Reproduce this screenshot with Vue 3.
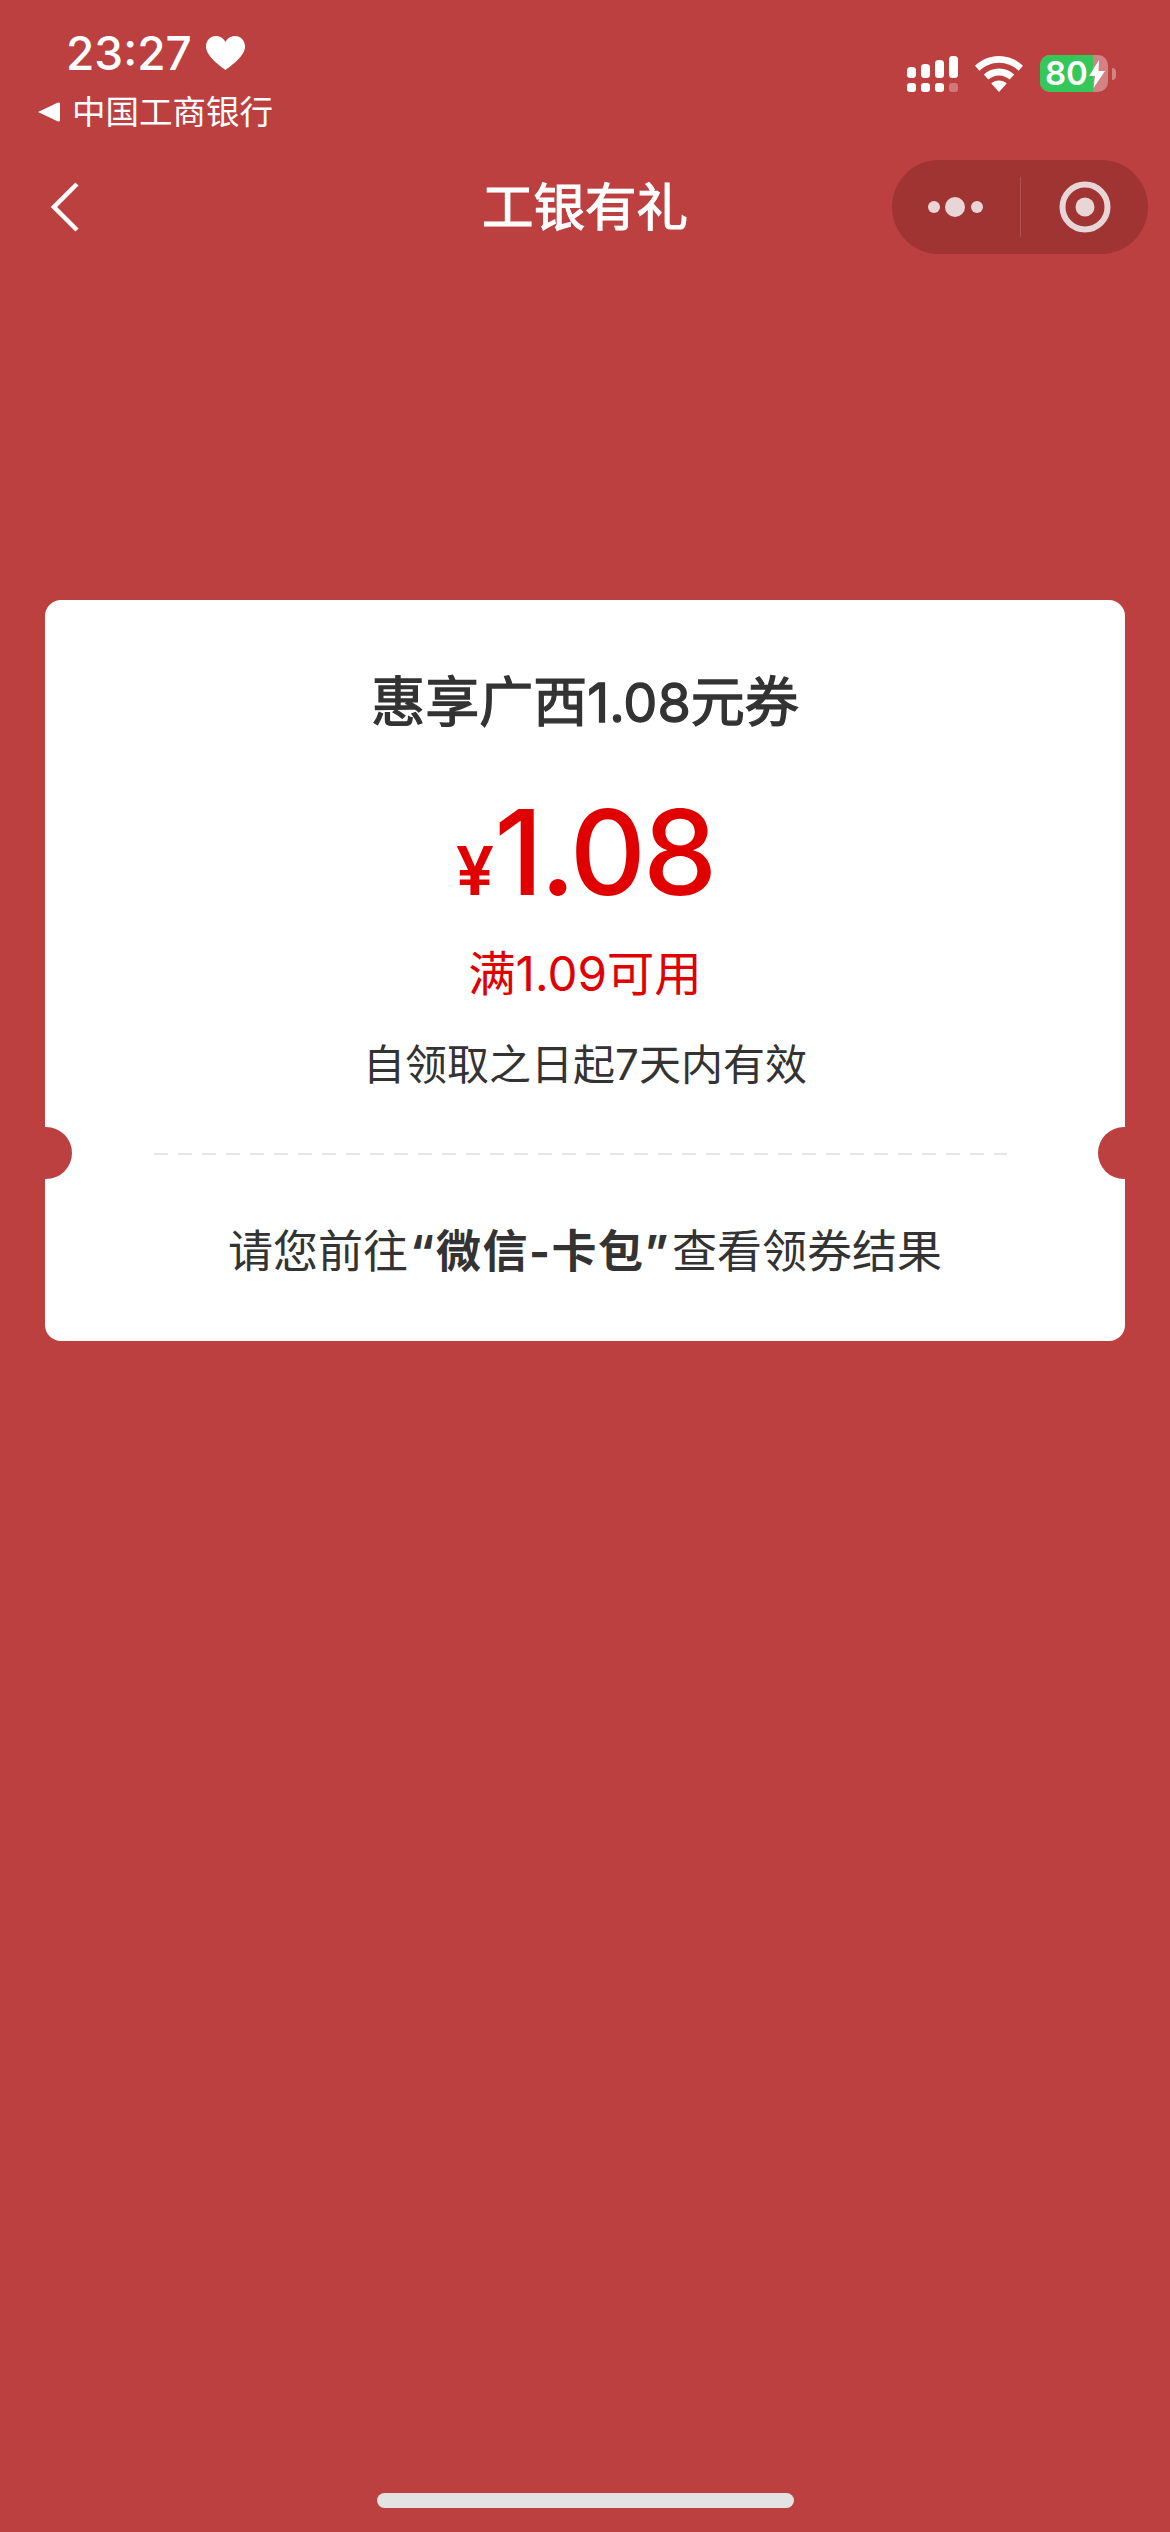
<script setup>
const signalBars = [
  { x: 907, y: 67, h: 11 },
  { x: 921, y: 64, h: 14 },
  { x: 935, y: 60, h: 18 },
  { x: 949, y: 56, h: 22 },
]
</script>

<template>
  <div class="page">
    <div class="status-bar">
      <div class="status-left">
        <div class="time-row">
          <span class="time">23:27</span>
          <svg class="heart" viewBox="0 0 39 34" width="39" height="34">
            <path d="M19.5 34C17 31.6 0 21 0 10.4 0 4.4 4.4 0 10 0c4 0 7.6 2.2 9.5 6C21.400 2.200 25 0 29 0c5.600 0 10 4.400 10 10.400C39 21 22 31.600 19.500 34z" fill="#fff" />
          </svg>
        </div>
        <div class="carrier-row">
          <svg class="carrier-arrow" viewBox="0 0 22 20" width="22" height="20">
            <path d="M0 10 20 0.500a1.500 1.500 0 0 1 2 1.500v16a1.500 1.500 0 0 1-2 1.500z" fill="#fff" />
          </svg>
          <span class="carrier">中国工商银行</span>
        </div>
      </div>
      <div class="status-right">
        <svg class="signal" viewBox="907 56 51 36" width="51" height="36">
          <rect v-for="bar in signalBars" :key="bar.x" :x="bar.x" :y="bar.y" width="9" :height="bar.h" rx="3.500" fill="#fff" />
          <rect x="907" y="83" width="9" height="9" rx="3" fill="#fff" />
          <rect x="921" y="83" width="9" height="9" rx="3" fill="#fff" />
          <rect x="935" y="83" width="9" height="9" rx="3" fill="#fff" />
          <rect x="949" y="83" width="9" height="9" rx="3" fill="#fff" fill-opacity="0.3" />
        </svg>
        <svg class="wifi" viewBox="0 0 48 36" width="48" height="36">
          <path d="M24 0C14.800 0 6.500 3.600 0 9.800l4.400 5C9.700 9.800 16.500 6.800 24 6.800s14.300 3 19.600 8l4.400-5C41.500 3.600 33.200 0 24 0z" fill="#fff" />
          <path d="M24 12.500c-5.900 0-11.200 2.300-15.200 6l4.500 5.100c2.800-2.600 6.500-4.200 10.700-4.200s7.900 1.600 10.700 4.200l4.500-5.100c-4-3.700-9.300-6-15.200-6z" fill="#fff" />
          <path d="M24 24.500c-3 0-5.700 1.200-7.700 3L24 36l7.700-8.500c-2-1.800-4.700-3-7.700-3z" fill="#fff" />
        </svg>
        <div class="battery">
          <div class="battery-body">
            <div class="battery-fill"></div>
            <span class="battery-text">80</span>
            <svg class="bolt" viewBox="0 0 16 28" width="16" height="28">
              <path d="M10 0 0 16h6l-1.500 12L16 11H9.500z" fill="#fff" />
            </svg>
          </div>
          <div class="battery-nub"></div>
        </div>
      </div>
    </div>

    <div class="nav-bar">
      <svg class="back" viewBox="0 0 28 50" width="28" height="50">
        <path d="M26 2 3 25l23 23" fill="none" stroke="#fff" stroke-width="4.500" />
      </svg>
      <div class="nav-title">工银有礼</div>
      <div class="capsule">
        <div class="capsule-part capsule-more">
          <svg viewBox="0 0 56 24" width="56" height="24">
            <circle cx="6" cy="12" r="6" fill="#e8d6d6" />
            <circle cx="27" cy="12" r="10" fill="#e8d6d6" />
            <circle cx="49" cy="12" r="6" fill="#e8d6d6" />
          </svg>
        </div>
        <div class="capsule-line"></div>
        <div class="capsule-part capsule-close">
          <svg viewBox="0 0 52 52" width="52" height="52">
            <circle cx="26" cy="26" r="22.500" fill="none" stroke="#e8d6d6" stroke-width="6" />
            <circle cx="26" cy="26" r="9.500" fill="#e8d6d6" />
          </svg>
        </div>
      </div>
    </div>

    <div class="card">
      <div class="card-top">
        <div class="card-title">惠享广西1.08元券</div>
        <div class="amount">
          <span class="yen">¥</span><span class="value">1.08</span>
        </div>
        <div class="threshold">满1.09可用</div>
        <div class="validity">自领取之日起7天内有效</div>
      </div>
      <div class="divider">
        <span class="notch notch-left"></span>
        <span class="dash"></span>
        <span class="notch notch-right"></span>
      </div>
      <div class="tip">请您前往<b>“微信-卡包”</b>查看领券结果</div>
    </div>

    <div class="home-indicator"></div>
  </div>
</template>

<style>
html,
body {
  margin: 0;
  background: #bb403f;
}
</style>

<style scoped>
.page {
  width: 1170px;
  height: 2532px;
  overflow: hidden;
  display: flex;
  flex-direction: column;
  background: #bb403f;
  font-family: "Inter", "Noto Sans CJK SC", sans-serif;
  color: #fff;
}

.status-bar {
  height: 132px;
  box-sizing: border-box;
  display: flex;
  justify-content: space-between;
  padding-left: 38px;
  padding-right: 54px;
}
.status-left {
  display: flex;
  flex-direction: column;
}
.time-row {
  display: flex;
  align-items: center;
  height: 34px;
  margin-top: 36px;
  padding-left: 28px;
}
.time {
  font-size: 46px;
  font-weight: 500;
  line-height: 34px;
  width: 140px;
}
.carrier-row {
  display: flex;
  align-items: center;
  margin-top: 24px;
}
.carrier-arrow {
  margin-right: 12px;
}
.carrier {
  font-size: 33.500px;
  line-height: 36px;
}
.status-right {
  display: flex;
  align-items: flex-start;
  padding-top: 55px;
}
.signal {
  margin-top: 1px;
}
.wifi {
  margin-left: 17px;
  margin-top: 1px;
}
.battery {
  margin-left: 17px;
  display: flex;
  align-items: center;
}
.battery-body {
  position: relative;
  width: 68px;
  height: 37px;
  border-radius: 10px;
  background: rgba(255, 255, 255, 0.35);
  display: flex;
  align-items: center;
}
.battery-fill {
  position: absolute;
  left: 0;
  top: 0;
  bottom: 0;
  width: 53px;
  border-radius: 10px 0 0 10px;
  background: #34c759;
}
.battery-text {
  position: relative;
  font-size: 33px;
  font-weight: 600;
  line-height: 37px;
  margin-left: 5px;
}
.bolt {
  position: relative;
  margin-left: 1px;
}
.battery-nub {
  width: 4px;
  height: 12px;
  margin-left: 4px;
  border-radius: 0 6px 6px 0;
  background: rgba(255, 255, 255, 0.35);
}

.nav-bar {
  position: relative;
  height: 150px;
  box-sizing: border-box;
  display: flex;
  align-items: center;
  justify-content: center;
}
.back {
  position: absolute;
  left: 51px;
  top: 50px;
}
.nav-title {
  font-size: 51.500px;
  line-height: 60px;
  -webkit-text-stroke: 1.200px #fff;
}
.capsule {
  position: absolute;
  left: 892px;
  top: 28px;
  width: 256px;
  height: 94px;
  border-radius: 47px;
  background: #a03433;
  display: flex;
  align-items: center;
}
.capsule-part {
  display: flex;
  align-items: center;
  justify-content: center;
}
.capsule-more {
  width: 128px;
}
.capsule-line {
  width: 1px;
  height: 60px;
  background: rgba(255, 255, 255, 0.15);
}
.capsule-close {
  flex: 1;
}

.card {
  width: 1080px;
  height: 741px;
  margin: 318px auto 0;
  border-radius: 16px;
  background: #fff;
  color: #333;
  display: flex;
  flex-direction: column;
  align-items: center;
}
.card-top {
  display: flex;
  flex-direction: column;
  align-items: center;
}
.card-title {
  margin-top: 68px;
  font-size: 54px;
  line-height: 70px;
  -webkit-text-stroke: 1.300px #333;
}
.amount {
  margin-top: 44px;
  height: 140px;
  display: flex;
  align-items: baseline;
  line-height: 140px;
  color: #e00000;
  font-weight: 500;
}
.yen {
  font-size: 68px;
  font-weight: 600;
}
.value {
  font-size: 118px;
  letter-spacing: -3px;
}
.threshold {
  margin-top: 22px;
  font-size: 47.500px;
  line-height: 60px;
  color: #e00000;
}
.validity {
  margin-top: 31px;
  font-size: 42px;
  line-height: 60px;
}
.divider {
  position: relative;
  width: 100%;
  height: 0;
  margin-top: 58px;
  display: flex;
  justify-content: center;
}
.dash {
  width: 853px;
  height: 2px;
  margin-right: 10px;
  background: repeating-linear-gradient(to right, #e6e6e6 0, #e6e6e6 14px, transparent 14px, transparent 24px);
}
.notch {
  position: absolute;
  top: -26px;
  width: 52px;
  height: 52px;
  border-radius: 50%;
  background: #bb403f;
}
.notch-left {
  left: -25px;
}
.notch-right {
  right: -25px;
}
.tip {
  margin-top: 69px;
  font-size: 45px;
  line-height: 60px;
}
.tip b {
  font-weight: 700;
  padding: 0 2px;
  letter-spacing: 1.500px;
}

.home-indicator {
  width: 417px;
  height: 15px;
  margin: auto auto 24px;
  border-radius: 8px;
  background: #e3e3e3;
}
</style>
